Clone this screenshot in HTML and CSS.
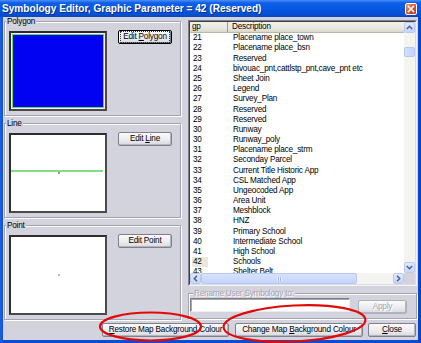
FILE: index.html
```html
<!DOCTYPE html>
<html>
<head>
<meta charset="utf-8">
<link rel="stylesheet" href="styles.css">
</head>
<body>
<div class="window">
  <div class="titlebar">
    <span class="title">Symbology Editor, Graphic Parameter = 42 (Reserved)</span>
    <span class="close-btn"><svg width="8" height="8" viewBox="0 0 8 8"><path d="M1.5 1.5 L6.5 6.5 M6.5 1.5 L1.5 6.5" stroke="#fff" stroke-width="1.6" stroke-linecap="square"/></svg></span>
  </div>
  <div class="client">
    <div class="main">
      <div class="left">
        <fieldset class="group">
          <legend>Polygon</legend>
          <div class="preview poly"><div class="poly-fill"></div></div>
          <button class="btn edit default"><span class="focus">Edit <u>P</u>olygon</span></button>
        </fieldset>
        <fieldset class="group">
          <legend>Line</legend>
          <div class="preview">
            <svg class="canvas" width="94" height="76" viewBox="0 0 94 76"><rect x="0" y="35" width="92" height="2" fill="#84dc84"/><rect x="47" y="37.5" width="2" height="1" fill="#333"/></svg>
          </div>
          <button class="btn edit">Edit <u>L</u>ine</button>
        </fieldset>
        <fieldset class="group">
          <legend>Point</legend>
          <div class="preview">
            <svg class="canvas" width="94" height="76" viewBox="0 0 94 76"><rect x="47" y="37.5" width="2" height="1" fill="#777"/></svg>
          </div>
          <button class="btn edit">Edit Point</button>
        </fieldset>
      </div>
      <div class="right">
        <div class="listbox">
          <div class="list-inner">
            <div class="list-header"><span class="h-gp">gp</span><span class="h-desc">Description</span></div>
            <div class="rows">
              <div class="row"><span class="gp">21</span><span class="desc">Placename place_town</span></div>
              <div class="row"><span class="gp">22</span><span class="desc">Placename place_bsn</span></div>
              <div class="row"><span class="gp">23</span><span class="desc">Reserved</span></div>
              <div class="row"><span class="gp">24</span><span class="desc">bivouac_pnt,cattlstp_pnt,cave_pnt etc</span></div>
              <div class="row"><span class="gp">25</span><span class="desc">Sheet Join</span></div>
              <div class="row"><span class="gp">26</span><span class="desc">Legend</span></div>
              <div class="row"><span class="gp">27</span><span class="desc">Survey_Plan</span></div>
              <div class="row"><span class="gp">28</span><span class="desc">Reserved</span></div>
              <div class="row"><span class="gp">29</span><span class="desc">Reserved</span></div>
              <div class="row"><span class="gp">30</span><span class="desc">Runway</span></div>
              <div class="row"><span class="gp">30</span><span class="desc">Runway_poly</span></div>
              <div class="row"><span class="gp">31</span><span class="desc">Placename place_strm</span></div>
              <div class="row"><span class="gp">32</span><span class="desc">Seconday Parcel</span></div>
              <div class="row"><span class="gp">33</span><span class="desc">Current Title Historic App</span></div>
              <div class="row"><span class="gp">34</span><span class="desc">CSL Matched App</span></div>
              <div class="row"><span class="gp">35</span><span class="desc">Ungeocoded App</span></div>
              <div class="row"><span class="gp">36</span><span class="desc">Area Unit</span></div>
              <div class="row"><span class="gp">37</span><span class="desc">Meshblock</span></div>
              <div class="row"><span class="gp">38</span><span class="desc">HNZ</span></div>
              <div class="row"><span class="gp">39</span><span class="desc">Primary School</span></div>
              <div class="row"><span class="gp">40</span><span class="desc">Intermediate School</span></div>
              <div class="row"><span class="gp">41</span><span class="desc">High School</span></div>
              <div class="row"><span class="gp"><span class="sel">42</span></span><span class="desc">Schools</span></div>
              <div class="row"><span class="gp">43</span><span class="desc">Shelter Belt</span></div>
            </div>
            <div class="vscroll">
              <div class="sb-btn"><svg width="7" height="5" viewBox="0 0 7 5"><path d="M0.8 4 L3.5 1.3 L6.2 4" fill="none" stroke="#4d6185" stroke-width="1.5"/></svg></div>
              <div class="v-track">
                <div class="v-thumb"></div>
              </div>
              <div class="sb-btn"><svg width="7" height="5" viewBox="0 0 7 5"><path d="M0.8 1 L3.5 3.7 L6.2 1" fill="none" stroke="#4d6185" stroke-width="1.5"/></svg></div>
            </div>
            <div class="hscroll">
              <div class="sb-btn"><svg width="5" height="7" viewBox="0 0 5 7"><path d="M4 0.8 L1.3 3.5 L4 6.2" fill="none" stroke="#4d6185" stroke-width="1.5"/></svg></div>
              <div class="h-thumb"><span class="grip"></span></div>
              <div class="h-track"></div>
              <div class="sb-btn"><svg width="5" height="7" viewBox="0 0 5 7"><path d="M1 0.8 L3.7 3.5 L1 6.2" fill="none" stroke="#4d6185" stroke-width="1.5"/></svg></div>
            </div>
            <div class="corner"></div>
          </div>
        </div>
        <fieldset class="group rename">
          <legend class="disabled">Rename User Symbology to:</legend>
          <div class="textbox"></div>
          <button class="btn apply" disabled>Apply</button>
        </fieldset>
      </div>
    </div>
    <div class="bottom">
      <button class="btn restore"><u>R</u>estore Map Background Colour</button>
      <button class="btn change">Change Map <u>B</u>ackground Colour</button>
      <button class="btn close"><u>C</u>lose</button>
    </div>
  </div>
  <svg class="annot" width="421" height="343" viewBox="0 0 421 343">
    <ellipse cx="150.5" cy="326.5" rx="50.5" ry="14" fill="none" stroke="#e00a0a" stroke-width="2.2"/>
    <ellipse cx="294.5" cy="323.5" rx="71" ry="18" fill="none" stroke="#e00a0a" stroke-width="2.2" transform="rotate(-3 294.5 323.5)"/>
  </svg>
</div>
</body>
</html>
```
FILE: styles.css
```css
html, body {
  margin: 0;
  padding: 0;
  background: #fff;
}

.window {
  position: relative;
  width: 421px;
  height: 343px;
  background: linear-gradient(90deg, #1f5fe0, #0b4cd2 4px, #0b4cd2 417px, #0a3fb8);
  display: flex;
  flex-direction: column;
  font-family: "Liberation Sans", Arial, sans-serif;
  font-size: 8.2px;
  letter-spacing: -0.2px;
  color: #000;
  overflow: hidden;
}

.titlebar {
  flex: none;
  height: 17px;
  display: flex;
  align-items: center;
  justify-content: space-between;
  padding-left: 2px;
  background: linear-gradient(#4a90f7 0, #0d5ee8 3px, #0658e2 9px, #0550d6 14px, #0647c0 17px);
}

.title {
  color: #fff;
  font-weight: bold;
  font-size: 10.1px;
  letter-spacing: 0;
  white-space: nowrap;
  text-shadow: 1px 1px 0 #0b2f8f;
}

.close-btn {
  width: 10px;
  height: 10px;
  margin-right: 4px;
  border: 1px solid #fff;
  border-radius: 2px;
  background: linear-gradient(135deg, #f09a7c, #dc4d26 55%, #c33a14);
  display: flex;
  align-items: center;
  justify-content: center;
}

.client {
  flex: 1;
  margin: 0 3px 3px;
  background: #d3d3de;
  display: flex;
  flex-direction: column;
}

.main {
  display: flex;
  gap: 7px;
  padding-left: 1px;
}

.left {
  width: 177px;
  display: flex;
  flex-direction: column;
  gap: 3px;
}

.right {
  width: 229px;
  display: flex;
  flex-direction: column;
  padding-top: 3px;
}

.group {
  margin: 0;
  min-inline-size: 0;
  border: 1px solid #a4a4b0;
  box-shadow: inset 1px 1px 0 #fff, 1px 1px 0 #fff;
  padding: 5px 4px 4px 4px;
  display: flex;
  align-items: flex-start;
}

.group legend {
  padding: 0 1px;
  margin-left: -3px;
  line-height: 9px;
  font-size: 8.2px;
  background: #d3d3de;
}

.preview {
  width: 98px;
  height: 80px;
  box-sizing: border-box;
  border: 2px solid;
  border-color: #2e2e2e #4a4a4a #4a4a4a #2e2e2e;
  background: #fff;
  flex: none;
}

.preview.poly {
  padding: 1px;
  background: #f4f4f4;
}

.poly-fill {
  height: 100%;
  box-sizing: border-box;
  border: 1px solid #5bdc5b;
  background: #0202f2;
}

.canvas {
  display: block;
}

.btn {
  font-family: inherit;
  font-size: 8.2px;
  letter-spacing: -0.2px;
  color: #000;
  height: 14px;
  padding: 0;
  box-sizing: border-box;
  border: 1px solid #80808c;
  border-radius: 2px;
  background: linear-gradient(#fbfbfd, #ececf1 55%, #d9d9e1);
  box-shadow: inset -1px -1px 0 #b4b4be;
  line-height: 12px;
  flex: none;
}

.btn u {
  text-decoration: underline;
}

.edit {
  width: 54px;
  margin-left: 11px;
  margin-top: -1px;
}

.default {
  border-color: #000;
  box-shadow: inset 1px 1px 0 #fff, inset -1px -1px 0 #808088;
}

.focus {
  display: inline-block;
  line-height: 8px;
  padding: 0 1px;
  outline: 1px dotted #333;
  outline-offset: 1px;
}

.listbox {
  height: 266px;
  box-sizing: border-box;
  border: 1px solid;
  border-color: #80808a #f4f4f8 #f4f4f8 #80808a;
}

.list-inner {
  height: 100%;
  box-sizing: border-box;
  border: 1px solid;
  border-color: #3f3f46 #dcdce4 #dcdce4 #3f3f46;
  background: #fff;
  display: grid;
  grid-template-columns: 1fr 11px;
  grid-template-rows: 11px 1fr 11px;
}

.list-header {
  grid-column: 1;
  grid-row: 1;
  display: flex;
  background: linear-gradient(#f1f0ea, #e8e7df 70%, #d8d6c9);
  border-bottom: 1px solid #b9b7aa;
  line-height: 10px;
}

.h-gp {
  width: 38px;
  box-sizing: border-box;
  padding-left: 2px;
  border-right: 1px solid #9d9b90;
}

.h-desc {
  padding-left: 4px;
}

.rows {
  grid-column: 1;
  grid-row: 2;
  overflow: hidden;
  padding-top: 0.3px;
}

.row {
  display: flex;
  height: 10.18px;
  line-height: 10.18px;
  white-space: nowrap;
}

.gp {
  width: 38px;
  flex: none;
  box-sizing: border-box;
  padding-left: 3px;
}

.sel {
  display: inline-block;
  width: 16px;
  margin-left: -1px;
  padding-left: 1px;
  box-sizing: border-box;
  background: #ebe8da;
}

.desc {
  padding-left: 5px;
}

.vscroll {
  grid-column: 2;
  grid-row: 1 / 3;
  display: flex;
  flex-direction: column;
  background: #f4f4f1;
}

.sb-btn {
  width: 11px;
  height: 11px;
  box-sizing: border-box;
  border: 1px solid #b7c9f3;
  border-radius: 2px;
  background: linear-gradient(#dfe8fd, #c6d6fb);
  display: flex;
  align-items: center;
  justify-content: center;
  flex: none;
}

.v-track {
  flex: 1;
  padding-top: 14px;
}

.v-thumb {
  height: 10px;
  box-sizing: border-box;
  border: 1px solid #b7c9f3;
  border-radius: 2px;
  background: linear-gradient(90deg, #d2defc, #c3d4fb);
}

.hscroll {
  grid-column: 1;
  grid-row: 3;
  display: flex;
  background: #f4f4f1;
}

.h-thumb {
  width: 156px;
  box-sizing: border-box;
  border: 1px solid #b7c9f3;
  border-radius: 2px;
  background: linear-gradient(#d6e1fd, #c4d5fb);
  display: flex;
  align-items: center;
  justify-content: center;
}

.grip {
  width: 5px;
  height: 4px;
  background: repeating-linear-gradient(90deg, #eef3fe 0 1px, #9fb5e8 1px 2px);
}

.h-track {
  flex: 1;
}

.corner {
  grid-column: 2;
  grid-row: 3;
  background: #d3d3de;
}

.rename {
  margin-top: 3px;
  padding: 0 3px 4px 1px;
}

.rename legend {
  margin-left: 3px;
}

.disabled {
  color: #a6a6b2;
  text-shadow: 1px 1px 0 #fff;
}

.textbox {
  width: 160px;
  height: 14px;
  box-sizing: border-box;
  border: 1px solid;
  border-color: #7c7c86 #ececf2 #ececf2 #7c7c86;
  box-shadow: inset 1px 1px 0 #a8a8b2;
  background: #fff;
  flex: none;
}

.apply {
  width: 49px;
  margin-left: 8px;
  margin-top: 2px;
  color: #a6a6b2;
  text-shadow: 1px 1px 0 #fff;
  border-color: #b0b0bb;
}

.bottom {
  margin-top: auto;
  display: flex;
  justify-content: flex-end;
  padding: 0 2px 3px 0;
}

.restore {
  width: 127px;
}

.change {
  width: 128px;
  margin-left: 6px;
}

.close {
  width: 48px;
  margin-left: 5px;
}

.annot {
  position: absolute;
  left: 0;
  top: 0;
  pointer-events: none;
}
```
